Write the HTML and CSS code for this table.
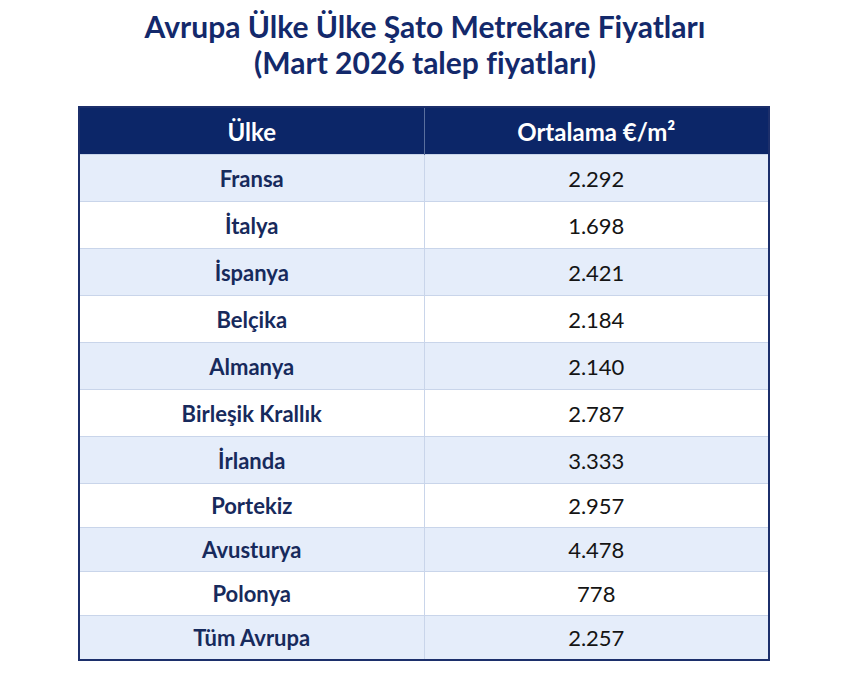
FILE: index.html
```html
<!DOCTYPE html>
<html lang="tr">
<head>
<meta charset="utf-8">
<title>Avrupa Şato Fiyatları</title>
<link rel="stylesheet" href="styles.css">
</head>
<body>
<div class="page">
  <h1 class="title">Avrupa Ülke Ülke Şato Metrekare Fiyatları<br>(Mart 2026 talep fiyatları)</h1>
  <table class="prices">
    <thead>
      <tr><th>Ülke</th><th>Ortalama €/m²</th></tr>
    </thead>
    <tbody>
      <tr><td class="c">Fransa</td><td class="v">2.292</td></tr>
      <tr><td class="c">İtalya</td><td class="v">1.698</td></tr>
      <tr><td class="c">İspanya</td><td class="v">2.421</td></tr>
      <tr><td class="c">Belçika</td><td class="v">2.184</td></tr>
      <tr><td class="c">Almanya</td><td class="v">2.140</td></tr>
      <tr><td class="c">Birleşik Krallık</td><td class="v">2.787</td></tr>
      <tr><td class="c">İrlanda</td><td class="v">3.333</td></tr>
      <tr class="short"><td class="c">Portekiz</td><td class="v">2.957</td></tr>
      <tr class="short"><td class="c">Avusturya</td><td class="v">4.478</td></tr>
      <tr class="short"><td class="c">Polonya</td><td class="v">778</td></tr>
      <tr class="short"><td class="c">Tüm Avrupa</td><td class="v">2.257</td></tr>
    </tbody>
  </table>
</div>
</body>
</html>
```
FILE: styles.css
```css
html, body {
  margin: 0;
  padding: 0;
  background: #ffffff;
}
body {
  font-family: Lato, "Noto Sans", "DejaVu Sans", sans-serif;
}
.page {
  width: 850px;
  height: 680px;
  padding-top: 8px;
  box-sizing: border-box;
}
.title {
  margin: 0 0 26px 0;
  text-align: center;
  font-size: 30px;
  line-height: 36px;
  font-weight: 700;
  color: #13296b;
}
.prices {
  margin: 0 0 0 78px;
  width: 692px;
  border-collapse: collapse;
  border: 2px solid #1c2f6b;
  table-layout: fixed;
}
.prices th {
  height: 46px;
  padding: 0;
  background: #0c2668;
  color: #ffffff;
  font-size: 24px;
  font-weight: 700;
  text-align: center;
  border-left: 1px solid #5a6f9e;
}
.prices th:first-child { border-left: none; }
.prices td {
  height: 46px;
  padding: 0;
  text-align: center;
  font-size: 22px;
  border-top: 1px solid #c9d5ea;
  border-left: 1px solid #c9d5ea;
}
.prices td:first-child { border-left: none; }
.prices tr.short td { height: 43px; }
.prices tbody tr:nth-child(odd) td { background: #e5edfa; }
.prices tbody tr:nth-child(even) td { background: #ffffff; }
.c {
  font-weight: 700;
  color: #172a5c;
}
.v {
  font-weight: 400;
  color: #141414;
}
```
